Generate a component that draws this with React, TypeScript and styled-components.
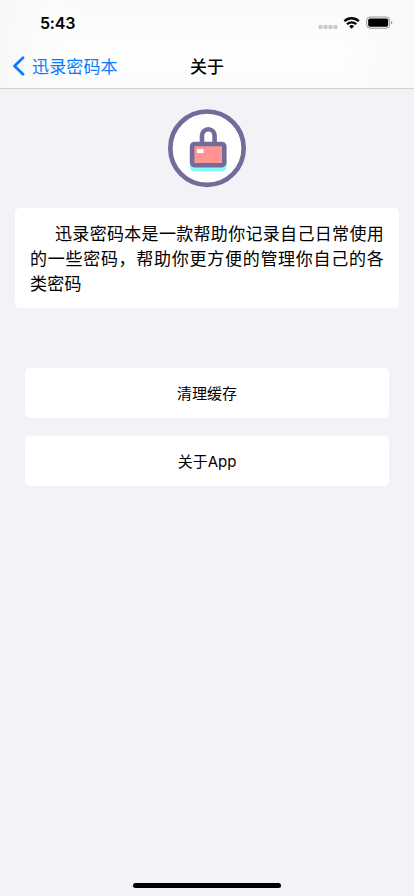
import React from "react";
import styled, { createGlobalStyle } from "styled-components";

const GlobalStyle = createGlobalStyle`
  * { box-sizing: border-box; }
  body {
    margin: 0;
    background: #f2f2f7;
    font-family: "Inter", "Noto Sans CJK SC", sans-serif;
    color: #000;
  }
`;

const Screen = styled.div`
  width: 414px;
  height: 896px;
  display: flex;
  flex-direction: column;
  background: #f2f2f7;
  overflow: hidden;
`;

const Header = styled.header`
  height: 89px;
  flex: none;
  border-bottom: 1px solid #d2d1d6;
  background: linear-gradient(90deg, #f8f8f8 0, rgba(252, 252, 252, 0.6) 50px, transparent 90px, transparent 340px, #f9f9f9 400px),
    linear-gradient(#fafafa, #fefefe 50px, #fcfcfc);
`;

const StatusBar = styled.div`
  height: 44px;
  display: flex;
  align-items: center;
  justify-content: space-between;
  padding: 2px 21px 0 40px;
`;

const Time = styled.span`
  font-size: 16px;
  line-height: 20px;
  font-weight: 600;
  letter-spacing: -0.2px;
`;

const NavBar = styled.nav`
  height: 44px;
  display: grid;
  grid-template-columns: 1fr auto 1fr;
  align-items: center;
  padding-left: 12px;
`;

const BackButton = styled.button`
  display: flex;
  align-items: center;
  gap: 7px;
  border: 0;
  padding: 0;
  background: none;
  color: #087cff;
  font: 400 17px/24px "Noto Sans CJK SC", sans-serif;
  letter-spacing: 0.15px;
`;

const Title = styled.h1`
  margin: 0;
  transform: translateX(-6px);
  font: 500 17px/24px "Noto Sans CJK SC", sans-serif;
`;

const Content = styled.main`
  flex: 1;
  display: flex;
  flex-direction: column;
  align-items: center;
  padding: 19px 15px 0;
`;

const Logo = styled.svg`
  display: block;
  width: 80px;
  height: 80px;
  flex: none;
`;

const Description = styled.p`
  width: 384px;
  height: 100px;
  margin: 20px 0 60px;
  padding: 12px 15px;
  border-radius: 5px;
  background: #fff;
  font: 400 17px/25.2px "Noto Sans CJK SC", sans-serif;
  letter-spacing: 0.28px;
  text-indent: 25px;
  text-align: justify;
`;

const Actions = styled.div`
  width: 364px;
  display: flex;
  flex-direction: column;
  gap: 18px;
`;

const ActionButton = styled.button`
  height: 50px;
  border: 0;
  border-radius: 5px;
  padding: 1px 0 0;
  background: #fff;
  color: #000;
  font: 400 15px/22px "Inter", "Noto Sans CJK SC", sans-serif;
`;

const HomeArea = styled.footer`
  height: 34px;
  display: flex;
  align-items: flex-end;
  justify-content: center;
  padding-bottom: 8px;
`;

const HomeIndicator = styled.div`
  width: 148px;
  height: 5px;
  border-radius: 3px;
  background: #000;
`;

const StatusIcons = () => (
  <svg width="76" height="16" viewBox="317 15 76 16" aria-hidden="true">
    <g fill="#c9c9c9">
      <rect x="318.5" y="25" width="4" height="4" rx="1.2" />
      <rect x="323.5" y="25" width="4" height="4" rx="1.2" />
      <rect x="328.5" y="25" width="4" height="4" rx="1.2" />
      <rect x="333.5" y="25" width="4" height="4" rx="1.2" />
    </g>
    <g fill="none" stroke="#000" strokeWidth="2.3">
      <path d="M344.4 21.2a10.3 10.3 0 0 1 14.4 0" />
      <path d="M347 24.2a6.5 6.5 0 0 1 9.2 0" />
    </g>
    <path d="M349.1 26.2a3.6 3.6 0 0 1 5 0l-2.5 2.5z" />
    <rect x="366.7" y="17" width="23" height="11.2" rx="3.3" fill="none" stroke="#969696" />
    <rect x="368.2" y="18.5" width="20" height="8.2" rx="1.8" />
    <path d="M391 20.9q1.4.5 1.4 1.7t-1.4 1.7z" fill="#999" />
  </svg>
);

const App = () => (
  <>
    <GlobalStyle />
    <Screen lang="zh-CN">
      <Header>
        <StatusBar>
          <Time>5:43</Time>
          <StatusIcons />
        </StatusBar>
        <NavBar>
          <BackButton>
            <svg width="13" height="20" viewBox="0 0 13 20" aria-hidden="true">
              <path d="M11 1.8 2.5 10l8.5 8.2" fill="none" stroke="currentColor" strokeWidth="2.7" strokeLinecap="round" strokeLinejoin="round" />
            </svg>
            迅录密码本
          </BackButton>
          <Title>关于</Title>
        </NavBar>
      </Header>
      <Content>
        <Logo viewBox="167 108 80 80" aria-hidden="true">
          <circle cx="207" cy="148.2" r="36.7" fill="#fff" stroke="#706d9b" strokeWidth="4.6" />
          <path d="M190 160h36.5v7a4.3 4.3 0 0 1-4.3 4.3h-27.9A4.3 4.3 0 0 1 190 167z" fill="#87fbf2" />
          <path d="M202 144v-8.4a6.3 6.3 0 0 1 12.6 0v8.4" fill="none" stroke="#706d9b" strokeWidth="4.6" />
          <rect x="192.1" y="144" width="32.2" height="21.2" rx="2.5" fill="#ff9492" stroke="#706d9b" strokeWidth="4.6" />
          <rect x="197" y="149" width="6.5" height="4" fill="#fff" />
        </Logo>
        <Description>迅录密码本是一款帮助你记录自己日常使用的一些密码，帮助你更方便的管理你自己的各类密码</Description>
        <Actions>
          <ActionButton>清理缓存</ActionButton>
          <ActionButton>关于App</ActionButton>
        </Actions>
      </Content>
      <HomeArea>
        <HomeIndicator />
      </HomeArea>
    </Screen>
  </>
);

export default App;
